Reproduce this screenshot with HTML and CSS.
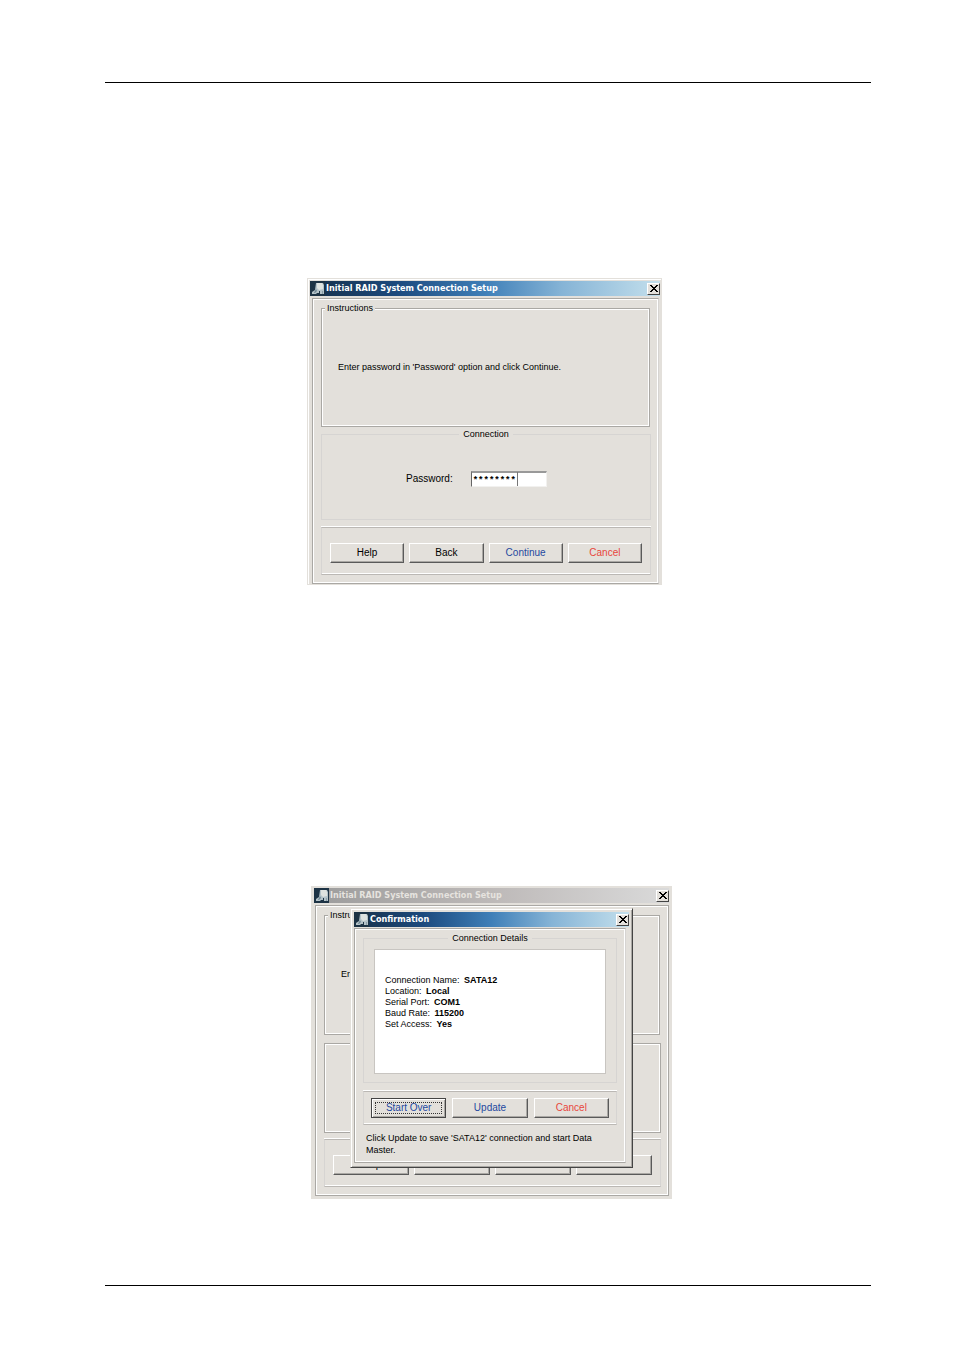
FILE: index.html
```html
<!DOCTYPE html>
<html lang="en">
<head>
<meta charset="utf-8">
<title>Initial RAID System Connection Setup</title>
<link rel="stylesheet" href="styles.css">
</head>
<body>
<svg width="0" height="0" class="defs" aria-hidden="true">
  <symbol id="app-icon" viewBox="0 0 15 15">
    <rect width="15" height="15" fill="#1d3345"/>
    <path d="M6 2h7l1 2v9h-4v-3H9v2H7l-1 1H2v-2l3-2z" fill="#b4c2c8"/>
    <path d="M7 2h5l1 2v4l-4 1-2-2z" fill="#dfe3e0"/>
    <path d="M6 8l1 2-2 2H4l1-2z" fill="#6f8794"/>
    <path d="M12 10h1v3h-1z" fill="#8d9fa8"/>
  </symbol>
  <symbol id="close-icon" viewBox="0 0 8 7">
    <path d="M0 0h2v1h1v1h2V1h1V0h2v1H7v1H6v1H5v1h1v1h1v1h1v1H6V6H5V5H3v1H2v1H0V6h1V5h1V4h1V3H2V2H1V1H0z" fill="#000"/>
  </symbol>
</svg>
<main class="page">
  <section class="window first">
    <header class="titlebar">
      <svg class="app"><use href="#app-icon"/></svg>
      <h2>Initial RAID System Connection Setup</h2>
      <button class="close" aria-label="Close"><svg><use href="#close-icon"/></svg></button>
    </header>
    <div class="panel">
      <fieldset class="group instructions">
        <legend>Instructions</legend>
        <p>Enter password in 'Password' option and click Continue.</p>
      </fieldset>
      <fieldset class="group faint connection">
        <legend>Connection</legend>
        <div class="field">
          <label for="password">Password:</label>
          <span class="entry"><input id="password" type="text" value="********"><i class="caret"></i></span>
        </div>
      </fieldset>
      <div class="actions">
        <button class="btn">Help</button>
        <button class="btn">Back</button>
        <button class="btn blue">Continue</button>
        <button class="btn red">Cancel</button>
      </div>
    </div>
  </section>

  <section class="window second">
    <header class="titlebar inactive">
      <svg class="app"><use href="#app-icon"/></svg>
      <h2>Initial RAID System Connection Setup</h2>
      <button class="close" aria-label="Close"><svg><use href="#close-icon"/></svg></button>
    </header>
    <div class="panel">
      <fieldset class="group instructions">
        <legend>Instru</legend>
        <p>En</p>
      </fieldset>
      <div class="group connection"></div>
      <div class="actions">
        <button class="btn">Help</button>
        <button class="btn" aria-label="Back"></button>
        <button class="btn" aria-label="Continue"></button>
        <button class="btn" aria-label="Cancel"></button>
      </div>
    </div>

    <div class="dialog" role="dialog" aria-label="Confirmation">
      <header class="titlebar">
        <svg class="app"><use href="#app-icon"/></svg>
        <h2>Confirmation</h2>
        <button class="close" aria-label="Close"><svg><use href="#close-icon"/></svg></button>
      </header>
      <div class="panel">
        <fieldset class="group faint summary">
          <legend>Connection Details</legend>
          <ul class="details">
            <li>Connection Name: <b>SATA12</b></li>
            <li>Location: <b>Local</b></li>
            <li>Serial Port: <b>COM1</b></li>
            <li>Baud Rate: <b>115200</b></li>
            <li>Set Access: <b>Yes</b></li>
          </ul>
        </fieldset>
        <div class="actions">
          <button class="btn blue focused">Start Over</button>
          <button class="btn blue">Update</button>
          <button class="btn red">Cancel</button>
        </div>
        <p class="note">Click Update to save 'SATA12' connection and start Data Master.</p>
      </div>
    </div>
  </section>
</main>
</body>
</html>
```
FILE: styles.css
```css
* { box-sizing: border-box; }
body {
  margin: 0;
  background: #fff;
  color: #000;
  font: 9px/11px "Liberation Sans", Arial, sans-serif;
}
h2, p, ul { margin: 0; padding: 0; }
ul { list-style: none; }
.defs { position: absolute; }

.page {
  margin: 82px 83px 83px 105px;
  padding: 195px 0 86px;
  border-top: 1px solid #000;
  border-bottom: 1px solid #000;
}

.window {
  position: relative;
  background: #e3e0db;
  border: 1px solid #e3e0db;
}
.first {
  max-width: 355px;
  margin-left: 202px;
  padding: 2px 1px 0;
  box-shadow: inset 1px 1px 0 #fff;
}
.second {
  max-width: 361px;
  margin: 301px 0 0 206px;
  padding: 1px 2px 2px;
}

.titlebar {
  display: flex;
  align-items: center;
  height: 15px;
  margin-left: 1px;
  background: linear-gradient(90deg, #17304a, #1c4a7e 25%, #3f7fb8 50%, #86b4d6 72%, #c3dfec);
  color: #fff;
}
.titlebar.inactive {
  margin-left: 0;
  background: linear-gradient(90deg, #9c9c9c, #bdb9b8 50%, #dadada);
  color: #e6e3df;
}
.titlebar h2 {
  flex: 1;
  padding-left: 1px;
  font: bold 9px/15px "DejaVu Sans Condensed", "DejaVu Sans", sans-serif;
  white-space: nowrap;
}
.app { width: 15px; height: 15px; flex: none; }
.close {
  display: grid;
  place-items: center;
  width: 13px;
  height: 12px;
  padding: 0;
  border: 1px solid;
  border-color: #fff #444 #444 #fff;
  background: #e3e0db;
}
.close svg { width: 8px; height: 7px; }

.panel {
  margin: 2px 0 0 3px;
  padding: 9px 7px 8px 8px;
  border: 1px solid #aaa8a4;
  box-shadow: inset 1px 1px 0 #fff, inset -1px -1px 0 #fff;
}
.first .panel { margin-right: 1px; border-right-color: #d6d4d2; }
.second .panel { margin-left: 1px; }

.group {
  min-width: 0;
  margin: 0;
  padding: 0;
  border: 1px solid #aaa8a4;
  box-shadow: inset 1px 1px 0 #fff, inset -1px -1px 0 #fff;
}
.group legend { padding: 0 2px; background: #e3e0db; }
.group.faint { border-color: #d6d4d2; box-shadow: none; }
.faint legend { margin: 0 auto; padding: 0 4px; }

.instructions { height: 124px; margin: -5px 1px 0 0; }
.instructions legend { margin-left: 3px; }
.instructions p { padding: 48px 0 0 16px; }
.connection { height: 91px; margin-top: 2px; }
.second .instructions { height: 125px; }
.second .connection { height: 90px; margin-top: 8px; }

.field {
  display: flex;
  align-items: center;
  gap: 18px;
  padding: 31px 0 0 84px;
  font: 10px/12px "Liberation Sans", Arial, sans-serif;
}
.entry { position: relative; display: flex; }
.entry input {
  width: 76px;
  height: 16px;
  padding: 2px 0 0 1px;
  border: 1px solid;
  border-color: #999 #f2f1ef #f2f1ef #666;
  border-top-width: 2px;
  border-radius: 0;
  background: #fff;
  font: bold 9px/11px "Liberation Mono", monospace;
  color: #000;
}
.caret { position: absolute; left: 46px; top: 1px; width: 1px; height: 14px; background: #777; }

.actions {
  display: flex;
  gap: 5px;
  margin-top: 7px;
  padding: 15px 8px 11px;
  border: 1px solid #bbb8b4;
  border-left-color: #d6d4d2;
  border-right-color: #d6d4d2;
  box-shadow: 0 -1px 0 #fff, inset 0 -1px 0 #fff;
}
.second .actions { margin-top: 6px; }
.btn {
  flex: 1;
  height: 20px;
  padding: 0;
  border: 1px solid;
  border-color: #fff #5a5a5a #5a5a5a #fff;
  border-radius: 0;
  background: #e3e0db;
  box-shadow: inset -1px -1px 0 #aaa8a4;
  color: #000;
  font: 10px/12px "Liberation Sans", Arial, sans-serif;
}
.blue { color: #2449a0; }
.red { color: #e8463c; }
.focused {
  border-color: #444;
  outline: 1px dotted #333;
  outline-offset: -5px;
  box-shadow: inset 1px 1px 0 #fff, inset -1px -1px 0 #aaa8a4;
}

.dialog {
  position: absolute;
  left: 38px;
  top: 21px;
  width: 283px;
  padding: 3px 3px 4px 2px;
  background: #e3e0db;
  border: 1px solid;
  border-color: #e3e0db #444 #444 #e3e0db;
  box-shadow: inset 1px 1px 0 #fff, inset -1px -1px 0 #aaa8a4;
}
.dialog .panel { margin: 1px 3px 0 1px; padding: 4px 8px 6px; border-color: #aaa8a4 #d6d4d2 #aaa8a4 #aaa8a4; }
.summary { padding: 5px 10px 8px; box-shadow: 1px 1px 0 #fff; }
.details {
  height: 125px;
  padding: 25px 10px 0;
  border: 1px solid #c8c5c1;
  background: #fff;
}
.details b { margin-left: 2px; }
.dialog .actions { gap: 6px; margin-top: 8px; padding: 6px 7px; }
.note { padding: 7px 3px 0; line-height: 12px; }
```
